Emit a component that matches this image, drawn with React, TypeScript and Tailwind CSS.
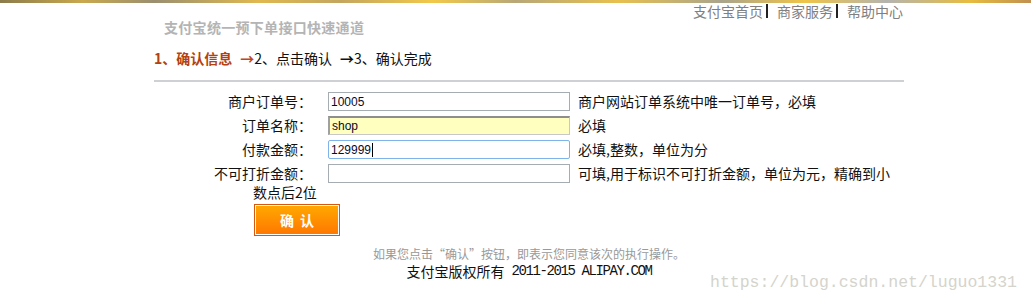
import React from 'react'

const cjk = "font-['SimSun','Noto_Sans_CJK_SC',sans-serif]"

const Field = ({ label, value, hint, variant }: { label: string; value: string; hint: string; variant?: 'yellow' | 'focus' }) => {
  let box = 'border border-[#a5acb2] bg-white'
  if (variant === 'yellow') box = 'border border-[#c8c8c8] border-t-2 border-l-2 border-t-[#8e8e8e] border-l-[#a0a0a0] bg-[#ffffc0]'
  if (variant === 'focus') box = 'border border-[#7eb4ea] rounded-[2px] bg-white'
  return (
    <>
      <div className="flex h-[19px] items-center justify-end text-[14px] leading-[15px] text-[#111]">{label}</div>
      <div className={`ml-[16px] flex h-[19px] items-center pl-[2px] font-['Liberation_Sans',sans-serif] text-[12px] text-[#0a0a2a] ${box}`}>
        {value}
        {variant === 'focus' && <span className="ml-[1px] inline-block h-[14px] w-px bg-black" />}
      </div>
      <div className="ml-[8px] flex h-[19px] items-center whitespace-nowrap text-[14px] leading-[15px] text-[#111]">{hint}</div>
    </>
  )
}

export default function App() {
  return (
    <div className={`relative h-[306px] w-[1031px] overflow-hidden bg-white ${cjk}`}>
      <div className="h-[3px] bg-[linear-gradient(to_right,#8c7c4c,#c9a84e_8%,#9a8f70_15%,#e0b850_25%,#c4a660_33%,#f2c84a_42%,#b8a878_50%,#e8c050_60%,#a9a48c_70%,#f0c448_78%,#b4b4b0_86%,#e8bc40_94%,#c09050)]" />
      <div className="ml-[154px] w-[750px]">
        <div className="flex h-[16px] items-center justify-end text-[14px] leading-[16px] text-[#808080]">
          <span>支付宝首页</span>
          <span className="mx-[3px] h-[14px] w-[2px] bg-[#222]" />
          <span className="ml-[6px]">商家服务</span>
          <span className="mx-[3px] h-[14px] w-[2px] bg-[#222]" />
          <span className="ml-[6px]">帮助中心</span>
          <span className="w-px" />
        </div>
        <div className="pl-[10px] text-[14px] font-bold leading-[16px] tracking-[0.3px] text-[#b4b4b4]">支付宝统一预下单接口快速通道</div>
        <div className="mt-[15px] flex items-center text-[14px] leading-[16px] text-[#111]">
          <span className="font-bold text-[#b5410f]">1、确认信息</span>
          <span className="ml-[8px] font-bold text-[#c0461a]">→</span>
          <span>2、点击确认</span>
          <span className="ml-[8px] font-bold">→</span>
          <span>3、确认完成</span>
        </div>
        <div className="mt-[14px] h-[2px] bg-[#cfd0d3]" />
        <div className="mt-[10px] grid grid-cols-[158px_258px_auto] gap-y-[5px]">
          <Field label="商户订单号：" value="10005" hint="商户网站订单系统中唯一订单号，必填" />
          <Field label="订单名称：" value="shop" hint="必填" variant="yellow" />
          <Field label="付款金额：" value="129999" hint="必填,整数，单位为分" variant="focus" />
          <Field label="不可打折金额：" value="" hint="可填,用于标识不可打折金额，单位为元，精确到小" />
        </div>
        <div className="mt-[2px] pl-[99px] text-[14px] leading-[14px] text-[#111]">数点后2位</div>
        <div className="ml-[100px] mt-[5px] h-[32px] w-[86px] border border-[#d8560e] bg-white p-px">
          <div className="flex h-full w-full items-center justify-center bg-[linear-gradient(to_bottom,#ffa800,#ff7800)] text-[14px] font-bold tracking-[6px] text-white">
            <span className="pl-[6px]">确认</span>
          </div>
        </div>
        <div className="mt-[11px] text-center text-[12px] leading-[14px] text-[#999]">如果您点击“确认”按钮，即表示您同意该次的执行操作。</div>
        <div className="mt-[2px] flex justify-center text-[14px] leading-[16px] text-[#111]">
          <span>支付宝版权所有</span>
          <span className="ml-[7px] font-['Liberation_Mono',monospace] text-[14px] tracking-[-1.4px]">2011-2015 ALIPAY.COM</span>
        </div>
      </div>
      <div className="absolute left-[710px] top-[274px] font-['Liberation_Mono',monospace] text-[16.5px] leading-[18px] text-[#d4d4cc]">https://blog.csdn.net/luguo1331</div>
    </div>
  )
}
